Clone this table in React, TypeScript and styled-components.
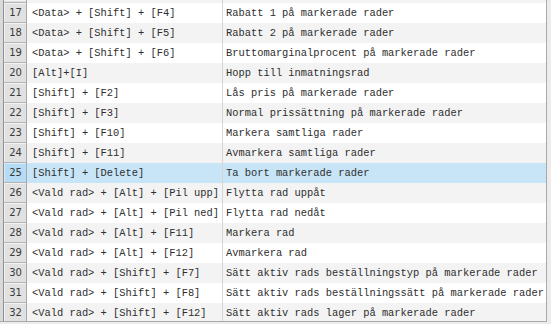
import React from "react";
import styled, { createGlobalStyle } from "styled-components";

const GlobalStyle = createGlobalStyle`
  html, body {
    margin: 0;
    padding: 0;
    background: #f0f0f0;
  }
`;

const Viewport = styled.div`
  width: 551px;
  height: 324px;
  overflow: hidden;
  background: #ececec;
`;

const Table = styled.div`
  width: 547px;
  height: 322px;
  overflow: hidden;
  border-right: 1px solid #a9a9a9;
  border-bottom: 1px solid #a9a9a9;
  box-sizing: border-box;
  padding-left: 3px;
  background-color: #d9d9d9;
`;

const Rows = styled.div`
  display: flex;
  flex-direction: column;
`;

const Row = styled.div<{ $alt: boolean; $selected?: boolean; $stub?: boolean }>`
  display: grid;
  grid-template-columns: 24px 195px 1fr;
  height: ${(p) => (p.$stub ? "3px" : "20px")};
  background: ${(p) => (p.$selected ? "#c7e5f7" : p.$alt ? "#f3f3f3" : "#ffffff")};
`;

const NumCell = styled.div<{ $selected?: boolean }>`
  display: flex;
  align-items: center;
  justify-content: center;
  box-sizing: border-box;
  border-left: 1px solid #8e8e8e;
  border-right: 1px solid #a8a8a8;
  border-bottom: 1px solid #b4b4b4;
  background: ${(p) => (p.$selected ? "#b5dcf4" : "#e1e1e1")};
  box-shadow: inset 1px 1px 0 ${(p) => (p.$selected ? "#d6ecfa" : "#f2f2f2")};
  font-family: "DejaVu Sans", Verdana, sans-serif;
  font-size: 10px;
  color: #3a3a3a;
  padding-left: 1px;
`;

const Cell = styled.div<{ $divider?: boolean }>`
  display: flex;
  align-items: center;
  box-sizing: border-box;
  padding-left: ${(p) => (p.$divider ? "3px" : "5px")};
  border-left: ${(p) => (p.$divider ? "1px solid #d6d6d6" : "none")};
  font-family: "Liberation Mono", "Courier New", monospace;
  font-size: 10.4px;
  color: #2e2e2e;
  white-space: pre;
  overflow: hidden;
`;

const data: [number, string, string][] = [
  [17, "<Data> + [Shift] + [F4]", "Rabatt 1 på markerade rader"],
  [18, "<Data> + [Shift] + [F5]", "Rabatt 2 på markerade rader"],
  [19, "<Data> + [Shift] + [F6]", "Bruttomarginalprocent på markerade rader"],
  [20, "[Alt]+[I]", "Hopp till inmatningsrad"],
  [21, "[Shift] + [F2]", "Lås pris på markerade rader"],
  [22, "[Shift] + [F3]", "Normal prissättning på markerade rader"],
  [23, "[Shift] + [F10]", "Markera samtliga rader"],
  [24, "[Shift] + [F11]", "Avmarkera samtliga rader"],
  [25, "[Shift] + [Delete]", "Ta bort markerade rader"],
  [26, "<Vald rad> + [Alt] + [Pil upp]", "Flytta rad uppåt"],
  [27, "<Vald rad> + [Alt] + [Pil ned]", "Flytta rad nedåt"],
  [28, "<Vald rad> + [Alt] + [F11]", "Markera rad"],
  [29, "<Vald rad> + [Alt] + [F12]", "Avmarkera rad"],
  [30, "<Vald rad> + [Shift] + [F7]", "Sätt aktiv rads beställningstyp på markerade rader"],
  [31, "<Vald rad> + [Shift] + [F8]", "Sätt aktiv rads beställningssätt på markerade rader"],
  [32, "<Vald rad> + [Shift] + [F12]", "Sätt aktiv rads lager på markerade rader"],
];

const SELECTED = 25;

const App: React.FC = () => {
  return (
    <Viewport>
      <GlobalStyle />
      <Table>
        <Rows>
          {/* bottom edge of row 16, scrolled out of view */}
          <Row $alt $stub>
            <NumCell />
            <Cell />
            <Cell $divider />
          </Row>
          {data.map(([n, keys, desc]) => (
            <Row key={n} $alt={n % 2 === 0} $selected={n === SELECTED}>
              <NumCell $selected={n === SELECTED}>{n}</NumCell>
              <Cell>{keys}</Cell>
              <Cell $divider>{desc}</Cell>
            </Row>
          ))}
        </Rows>
      </Table>
    </Viewport>
  );
};

export default App;
